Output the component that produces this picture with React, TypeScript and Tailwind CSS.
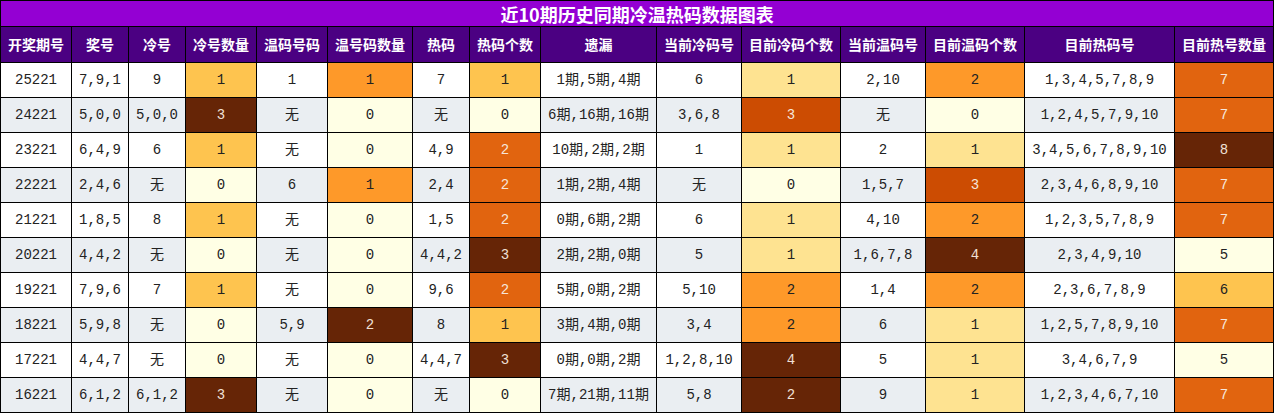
const COLS = [71, 57, 57, 71, 71, 85, 57, 71, 116, 85, 99, 85, 99, 150, 99];

const HEADERS = [
  "开奖期号",
  "奖号",
  "冷号",
  "冷号数量",
  "温码号码",
  "温号码数量",
  "热码",
  "热码个数",
  "遗漏",
  "当前冷码号",
  "目前冷码个数",
  "当前温码号",
  "目前温码个数",
  "目前热码号",
  "目前热号数量",
];

type Shade = "c0" | "c1" | "c2" | "c3" | "c4" | "c5" | "c6";

const SHADES: Record<Shade, string> = {
  c0: "bg-[#ffffe5] text-[#222]",
  c1: "bg-[#fee391] text-[#222]",
  c2: "bg-[#fec44f] text-[#222]",
  c3: "bg-[#fe9929] text-[#222]",
  c4: "bg-[#e1640f] text-[#f6e6da]",
  c5: "bg-[#cc4c02] text-[#f6e6da]",
  c6: "bg-[#662506] text-[#f0e0d6]",
};

// columns that carry a colour scale
const SHADED = [3, 5, 7, 10, 12, 14];

type Row = { cells: string[]; shades: Shade[] };

const ROWS: Row[] = [
  {
    cells: ["25221", "7,9,1", "9", "1", "1", "1", "7", "1", "1期,5期,4期", "6", "1", "2,10", "2", "1,3,4,5,7,8,9", "7"],
    shades: ["c2", "c3", "c2", "c1", "c3", "c4"],
  },
  {
    cells: ["24221", "5,0,0", "5,0,0", "3", "无", "0", "无", "0", "6期,16期,16期", "3,6,8", "3", "无", "0", "1,2,4,5,7,9,10", "7"],
    shades: ["c6", "c0", "c0", "c5", "c0", "c4"],
  },
  {
    cells: ["23221", "6,4,9", "6", "1", "无", "0", "4,9", "2", "10期,2期,2期", "1", "1", "2", "1", "3,4,5,6,7,8,9,10", "8"],
    shades: ["c2", "c0", "c4", "c1", "c1", "c6"],
  },
  {
    cells: ["22221", "2,4,6", "无", "0", "6", "1", "2,4", "2", "1期,2期,4期", "无", "0", "1,5,7", "3", "2,3,4,6,8,9,10", "7"],
    shades: ["c0", "c3", "c4", "c0", "c5", "c4"],
  },
  {
    cells: ["21221", "1,8,5", "8", "1", "无", "0", "1,5", "2", "0期,6期,2期", "6", "1", "4,10", "2", "1,2,3,5,7,8,9", "7"],
    shades: ["c2", "c0", "c4", "c1", "c3", "c4"],
  },
  {
    cells: ["20221", "4,4,2", "无", "0", "无", "0", "4,4,2", "3", "2期,2期,0期", "5", "1", "1,6,7,8", "4", "2,3,4,9,10", "5"],
    shades: ["c0", "c0", "c6", "c1", "c6", "c0"],
  },
  {
    cells: ["19221", "7,9,6", "7", "1", "无", "0", "9,6", "2", "5期,0期,2期", "5,10", "2", "1,4", "2", "2,3,6,7,8,9", "6"],
    shades: ["c2", "c0", "c4", "c3", "c3", "c2"],
  },
  {
    cells: ["18221", "5,9,8", "无", "0", "5,9", "2", "8", "1", "3期,4期,0期", "3,4", "2", "6", "1", "1,2,5,7,8,9,10", "7"],
    shades: ["c0", "c6", "c2", "c3", "c1", "c4"],
  },
  {
    cells: ["17221", "4,4,7", "无", "0", "无", "0", "4,4,7", "3", "0期,0期,2期", "1,2,8,10", "4", "5", "1", "3,4,6,7,9", "5"],
    shades: ["c0", "c0", "c6", "c6", "c1", "c0"],
  },
  {
    cells: ["16221", "6,1,2", "6,1,2", "3", "无", "0", "无", "0", "7期,21期,11期", "5,8", "2", "9", "1", "1,2,3,4,6,7,10", "7"],
    shades: ["c6", "c0", "c0", "c6", "c1", "c4"],
  },
];

export default function App() {
  return (
    <div className="w-[1274px] bg-white">
      <table className="w-[1274px] table-fixed border-collapse border border-black">
        <colgroup>
          {COLS.map((w, i) => (
            <col key={i} style={{ width: w }} />
          ))}
        </colgroup>
        <thead>
          <tr>
            <th
              colSpan={15}
              className="h-[26px] border border-black bg-[#9400d3] p-0 text-center font-['Noto_Sans_CJK_SC',sans-serif] text-[18px] font-bold leading-none text-white"
            >
              近10期历史同期冷温热码数据图表
            </th>
          </tr>
          <tr>
            {HEADERS.map((h) => (
              <th
                key={h}
                className="h-[36px] border border-black bg-[#4b0082] p-0 text-center font-['Noto_Sans_CJK_SC',sans-serif] text-[14px] font-bold whitespace-nowrap text-white"
              >
                {h}
              </th>
            ))}
          </tr>
        </thead>
        <tbody>
          {ROWS.map((row, r) => (
            <tr key={row.cells[0]} className={r % 2 === 0 ? "bg-white" : "bg-[#eaeef2]"}>
              {row.cells.map((c, i) => {
                const s = SHADED.indexOf(i);
                const tone = s >= 0 ? SHADES[row.shades[s]] : "text-[#222]";
                return (
                  <td
                    key={i}
                    className={`h-[35px] border border-black p-0 text-center font-['Liberation_Mono','Noto_Sans_CJK_SC',monospace] text-[14px] whitespace-nowrap ${tone}`}
                  >
                    {c}
                  </td>
                );
              })}
            </tr>
          ))}
        </tbody>
      </table>
    </div>
  );
}
